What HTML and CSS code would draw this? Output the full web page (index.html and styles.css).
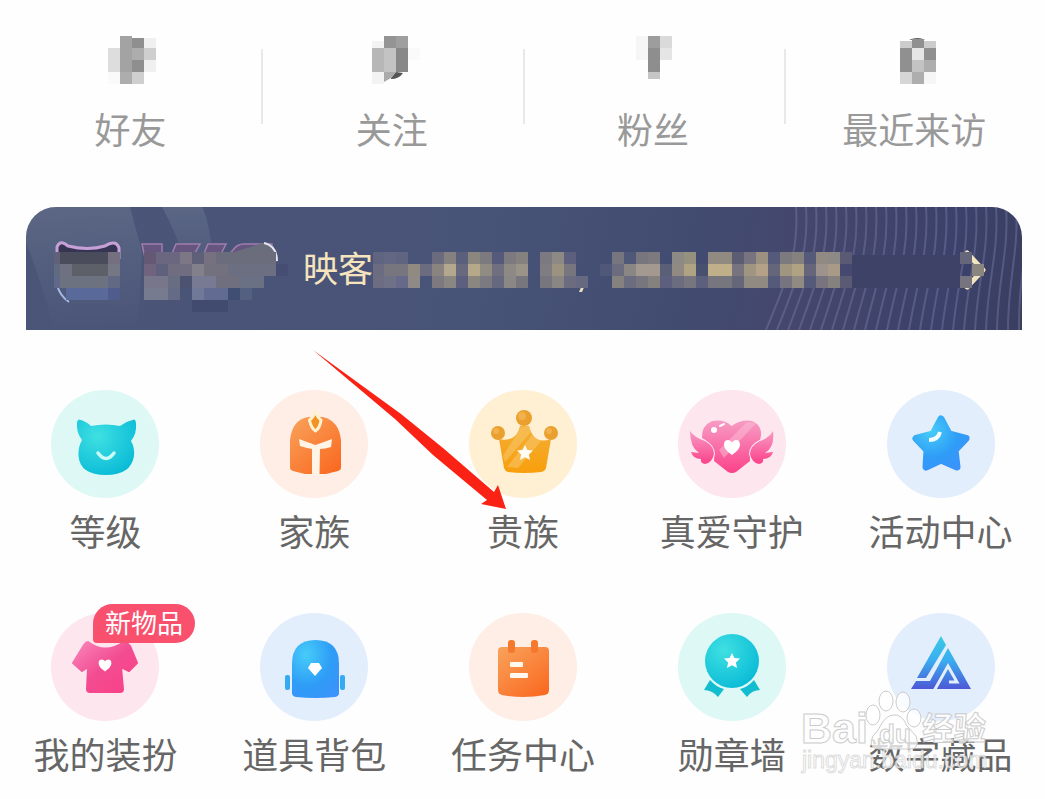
FILE: index.html
```html
<!DOCTYPE html>
<html lang="zh-CN">
<head>
<meta charset="utf-8">
<meta name="viewport" content="width=device-width, initial-scale=1">
<title>我的</title>
<link rel="stylesheet" href="styles.css">
</head>
<body>
<svg class="defs" width="0" height="0" aria-hidden="true">
  <defs>
    <radialGradient id="cyan" cx=".35" cy=".3" r=".8"><stop offset="0" stop-color="#3fe0e2"/><stop offset="1" stop-color="#07b9d6"/></radialGradient>
    <linearGradient id="orange" x1="0" y1="0" x2=".8" y2="1"><stop offset="0" stop-color="#f9a35c"/><stop offset="1" stop-color="#fa6b22"/></linearGradient>
    <linearGradient id="gold" x1="0" y1="0" x2="0" y2="1"><stop offset="0" stop-color="#f3ae35"/><stop offset="1" stop-color="#f89f0c"/></linearGradient>
    <linearGradient id="pink" x1="0" y1="0" x2="0" y2="1"><stop offset="0" stop-color="#f79cc4"/><stop offset="1" stop-color="#fb4189"/></linearGradient>
    <linearGradient id="rose" x1="0" y1="0" x2="1" y2="1"><stop offset="0" stop-color="#f987bb"/><stop offset=".5" stop-color="#f34c91"/><stop offset="1" stop-color="#fb3f86"/></linearGradient>
    <radialGradient id="blue" cx=".3" cy=".25" r=".9"><stop offset="0" stop-color="#46ccf8"/><stop offset=".6" stop-color="#2f9df7"/><stop offset="1" stop-color="#3a92fb"/></radialGradient>
    <linearGradient id="peak" gradientUnits="userSpaceOnUse" x1="0" y1="23" x2="0" y2="76"><stop offset="0" stop-color="#3bcbe4"/><stop offset=".45" stop-color="#3aaef0"/><stop offset="1" stop-color="#4d59d6"/></linearGradient>
    <path id="star" d="M0-8 2.4-3 8-2.4 3.9 1.4 5 7 0 4.2-5 7-3.9 1.4-8-2.4-2.4-3Z"/>
    <path id="heart" d="M0 8C-4 5-8 2-8-2.500C-8-8-2-8 0-4.500C2-8 8-8 8-2.500C8 2 4 5 0 8Z"/>
  </defs>
</svg>

<main class="page">
  <nav class="stats">
    <a class="stat" href="#">
      <svg class="stat-value" viewBox="0 0 60 48" shape-rendering="crispEdges" aria-hidden="true">
        <path fill="#ddd" d="M7 12h12v24H7z"/><path fill="#a3a3a3" d="M19 0h12v36H19z"/><path fill="#8f8f8f" d="M31 2h12v10H31zM31 24h12v12H31z"/><path fill="#adadad" d="M31 12h12v12H31zM19 36h12v12H19z"/><path fill="#f0f0f0" d="M43 2h12v10H43zM43 24h12v12H43z"/><path fill="#cfcfcf" d="M43 12h12v12H43zM31 36h12v12H31z"/><path fill="#fafafa" d="M7 36h12v12H7z"/>
      </svg>
      <span class="stat-label">好友</span>
    </a>
    <a class="stat" href="#">
      <svg class="stat-value" viewBox="0 0 60 48" aria-hidden="true">
        <path fill="#555" d="M29 42 34 36 41 37Q37 43 29 43z"/>
        <g shape-rendering="crispEdges"><path fill="#f3f3f3" d="M10 5h12v7H10zM10 36h12v12H10z"/><path fill="#949494" d="M22 0h12v12H22z"/><path fill="#9f9f9f" d="M34 0h12v12H34z"/><path fill="#b7b7b7" d="M10 12h12v24H10z"/><path fill="#c3c3c3" d="M22 12h12v24H22z"/><path fill="#888" d="M34 12h12v24H34z"/><path fill="#fafafa" d="M46 12h12v12H46z"/></g><path fill="#ababab" d="M22 36h12l-5 6-7 4z"/>
      </svg>
      <span class="stat-label">关注</span>
    </a>
    <a class="stat" href="#">
      <svg class="stat-value" viewBox="0 0 60 48" shape-rendering="crispEdges" aria-hidden="true">
        <path fill="#f6f6f6" d="M13 0h12v24H13z"/><path fill="#9d9d9d" d="M25 0h12v12H25z"/><path fill="#8e8e8e" d="M25 12h12v24H25z"/><path fill="#dadada" d="M37 0h12v12H37z"/><path fill="#e5e5e5" d="M37 12h12v12H37z"/><path fill="#c5c5c5" d="M25 36h12v7H25z"/>
      </svg>
      <span class="stat-label">粉丝</span>
    </a>
    <a class="stat" href="#">
      <svg class="stat-value" viewBox="0 0 60 48" aria-hidden="true">
        <path fill="#555" d="M25 4q9-4 16 0z"/>
        <g shape-rendering="crispEdges"><path fill="#ccc" d="M16 5h12v7H16zM40 5h12v7H40z"/><path fill="#909090" d="M28 3h12v9H28zM16 12h12v24H16zM40 12h12v12H40z"/><path fill="#e6e6e6" d="M28 12h12v12H28z"/><path fill="#c3c3c3" d="M28 24h12v12H28z"/><path fill="#aeaeae" d="M40 24h12v12H40zM28 36h12v12H28z"/><path fill="#d6d6d6" d="M16 36h12v12H16z"/><path fill="#f6f6f6" d="M40 36h12v12H40z"/></g>
      </svg>
      <span class="stat-label">最近来访</span>
    </a>
  </nav>

  <a class="banner" href="#">
    <svg class="banner-backdrop" viewBox="0 0 996 123" preserveAspectRatio="none" aria-hidden="true">
      <defs><linearGradient id="sheen" x1="0" y1="0" x2="0" y2="1"><stop offset="0" stop-color="#8090a4" stop-opacity=".3"/><stop offset="1" stop-color="#8090a4" stop-opacity="0"/></linearGradient></defs>
      <path fill="url(#sheen)" d="M0 0H104L116 45 112 123H28Q14 70 0 36Z"/>
      <path fill="url(#sheen)" d="M136 0H176Q184 14 188 60L168 90Q158 40 136 0Z"/>
      <g id="ripples" fill="none" stroke="#7f82ae" stroke-opacity=".4" stroke-width="2"></g>
      <path fill="#3d4266" d="M822 48H934V81H822Z"/>
    </svg>
    <svg class="banner-logo" viewBox="0 0 277 123" aria-hidden="true">
      <path fill="#353553" stroke="#c7a0d8" stroke-width="3" d="M31 52V40Q34 32 42 39 62 44 79 39 90 32 93 41V52"/>
      <path fill="none" stroke="#a7b8e6" stroke-width="2" d="M31 78Q34 89 43 95"/>
      <g fill="#66557f" stroke="#a07daf" stroke-width="1.500"><path d="M116 37h20v14h-17zM150 37h24l-8 14h-22zM182 37h18l-7 14h-17zM207 43q4-6 11-6h28v14h-46z"/></g>
      <path fill="#696d7c" d="M205 46 240 35Q251 39 251 55H200Z"/>
      <path fill="none" stroke="#e6e4ee" stroke-width="2" d="M238 36Q251 39 251 54"/>
      <g data-mosaic="logo" shape-rendering="crispEdges"></g>
    </svg>
    <span class="banner-text">映客</span>
    <svg class="banner-rest" viewBox="0 0 649 123" preserveAspectRatio="xMinYMid meet" aria-hidden="true">
      <g fill="#eadfbd"><circle cx="74" cy="47" r="2"/><circle cx="102" cy="47" r="2"/><path d="M122 46h3v3h-3zM142 46h3v3h-3zM151 46h4v3h-4zM172 46h3v3h-3zM209 78h3l-3 7h-3z"/></g>
      <path fill="none" stroke="#f1e3bd" stroke-width="5" stroke-linecap="round" stroke-linejoin="round" d="M594 46 610 63 594 80"/>
      <g data-mosaic="headline" shape-rendering="crispEdges"></g>
    </svg>
  </a>

  <nav class="menu">
    <a class="item" href="#">
      <svg class="icon cyan" viewBox="0 0 108 108" aria-hidden="true">
        <path fill="url(#cyan)" d="M28 29.500Q35 31 40 36Q55 33 69 36Q76 31 83 29.500Q85 30 85 34Q86 43 80 51Q84 58 83 66Q80 85 55 85Q29 85 27.500 66Q27 57 31 50Q25 42 26 33Q26 30 28 29.500Z"/>
        <path fill="none" stroke="#c9fbf7" stroke-width="3.500" stroke-linecap="round" d="M47 63Q55 74 63 63"/>
      </svg>
      <span class="item-label">等级</span>
    </a>
    <a class="item" href="#">
      <svg class="icon orange" viewBox="0 0 108 108" aria-hidden="true">
        <path fill="url(#orange)" d="M30 78V50Q32 30 48 27H63Q79 31 81 50V78Q81 80 78 81L66 84H45L33 81Q30 80 30 78Z"/>
        <path fill="#fff4e6" d="M39 49Q47 52 55.500 55Q64 52 72 49L71 57Q65 59 60 59L59.500 85H52V59Q46 58 40 56Z"/>
        <path fill="#f29220" stroke="#fff1cf" stroke-width="3" stroke-linejoin="round" d="M55.500 21Q57 27 61 30Q60 38 55.500 41Q51 38 49.500 30Q54 27 55.500 21Z"/>
      </svg>
      <span class="item-label">家族</span>
    </a>
    <a class="item" href="#">
      <svg class="icon gold" viewBox="0 0 108 108" aria-hidden="true">
        <path fill="url(#gold)" d="M30 49Q37 51 43 48Q49 45 51 36H60Q62 45 68 49Q74 52 82 49L77 78Q76 81 72 82Q55 84 39 82Q36 81 35 78Z"/>
        <path fill="#f8c566" opacity=".6" d="M52 37 60 36 62 42 36 72 34 66ZM63 45 68 49 72 51 49 78 38 77Z"/>
        <g fill="#eaa02e"><circle cx="55" cy="28" r="8"/><circle cx="29" cy="43" r="7"/><circle cx="82" cy="43" r="7"/></g>
        <g fill="#f6bd61" opacity=".6"><circle cx="53" cy="26" r="4"/><circle cx="27" cy="41" r="3"/><circle cx="80" cy="41" r="3"/></g>
        <use href="#star" x="56" y="63" fill="#fffdf5"/>
      </svg>
      <span class="item-label">贵族</span>
      <svg class="pointer" viewBox="0 0 194 160" aria-hidden="true"><path fill="#fa2214" d="M0 0 88 64 130 98 181 142 185 135 193 159 168 154 174 150 120 105 82 69Z"/></svg>
    </a>
    <a class="item" href="#">
      <svg class="icon pink" viewBox="0 0 108 108" aria-hidden="true">
        <path fill="url(#pink)" d="M53.500 36Q64 29 74 31Q86 36 82 50Q71 55 72 71L58 82Q54 84 50 82L36 71Q38 56 24 48Q23 36 34 31Q46 29 53.500 36Z"/>
        <path fill="#fbc0d8" opacity=".5" d="M69 32 78 33 46 68 41 60Z"/>
        <path fill="url(#pink)" stroke="#fee6ef" stroke-width="2" paint-order="stroke" d="M12 41Q17 48 27 51Q36 56 36 64Q34 73 27 74Q22 73 23 69Q15 69 13 62L21 63Q12 57 12 41ZM95 41Q91 48 82 51Q72 56 72 64Q74 73 81 74Q86 73 85 69Q93 69 95 62L87 63Q97 57 95 41Z"/>
        <use href="#heart" x="54" y="57" fill="#fff"/><circle cx="36" cy="40" r="3" fill="#fff"/><path fill="none" stroke="#fff" stroke-width="2" stroke-linecap="round" d="m42 36 4-2"/>
      </svg>
      <span class="item-label">真爱守护</span>
    </a>
    <a class="item" href="#">
      <svg class="icon blue" viewBox="0 0 108 108" aria-hidden="true">
        <path fill="url(#blue)" stroke="url(#blue)" stroke-width="7" stroke-linejoin="round" d="M54 29 62 44 79 48.500 68 60 70 77 54 70 39 77 40 60 29 48.500 46 44Z"/>
        <path fill="none" stroke="#f5fcff" stroke-width="4" d="M42 50Q51 50 53 42"/>
      </svg>
      <span class="item-label">活动中心</span>
    </a>
    <a class="item" href="#">
      <svg class="icon pink" viewBox="0 0 108 108" aria-hidden="true">
        <path fill="url(#rose)" stroke="url(#rose)" stroke-width="2" stroke-linejoin="round" d="M37 29Q54 42 73 29Q77 30 79 33L86 50 78 58 70 54 72 76Q72 79 69 79H39Q36 79 36 76L37 54 31 58 22 50 33 32Q35 29 37 29Z"/>
        <use href="#heart" transform="translate(54 52) scale(.8)" fill="#fff"/>
      </svg>
      <span class="item-label">我的装扮</span>
      <span class="badge">新物品</span>
    </a>
    <a class="item" href="#">
      <svg class="icon blue" viewBox="0 0 108 108" aria-hidden="true">
        <path fill="url(#blue)" d="M32 80V51Q32 27 55.500 27T79 51V80Q79 83 75 84Q55 86 36 84Q32 83 32 80Z"/>
        <g fill="#35aaf2"><rect x="25" y="62" width="5" height="15" rx="2"/><rect x="80" y="62" width="5" height="15" rx="2"/></g>
        <path fill="#fff" d="M51 50H59L62 55 55 63 48 55Z"/>
      </svg>
      <span class="item-label">道具背包</span>
    </a>
    <a class="item" href="#">
      <svg class="icon orange" viewBox="0 0 108 108" aria-hidden="true">
        <path fill="url(#orange)" d="M29 38Q29 34 33 34H76Q80 34 80 38V77Q80 81 76 82Q54 86 33 82Q29 81 29 77Z"/>
        <g fill="#f4792c"><rect x="39" y="27" width="7" height="13" rx="3"/><rect x="62" y="27" width="7" height="13" rx="3"/></g>
        <g fill="#fff8ee"><rect x="41" y="49" width="13" height="5" rx="1"/><rect x="41" y="60" width="18" height="5" rx="1"/></g>
      </svg>
      <span class="item-label">任务中心</span>
    </a>
    <a class="item" href="#">
      <svg class="icon cyan" viewBox="0 0 108 108" aria-hidden="true">
        <circle cx="54" cy="48" r="27" fill="url(#cyan)"/>
        <path fill="#12bdd0" d="M32 67Q38 74 46 76L40 84Q34 77 26 77ZM76 67Q70 74 62 76L69 84Q74 77 82 77Z"/>
        <use href="#star" x="54" y="48" fill="#fff"/>
      </svg>
      <span class="item-label">勋章墙</span>
    </a>
    <a class="item" href="#">
      <svg class="icon blue" viewBox="0 0 108 108" aria-hidden="true">
        <path fill="url(#peak)" d="M54 23 59 32 39 65H30ZM61 35 84 76H24L29 68H43Z"/>
        <path fill="none" stroke="#e3eefd" stroke-width="3" d="M47 78 61 53 70 69H62"/>
      </svg>
      <span class="item-label">数字藏品</span>
    </a>
  </nav>

  <svg class="watermark" viewBox="0 0 194 98" aria-hidden="true">
    <g fill="#fff" fill-opacity=".75" stroke="#ccc" stroke-width="1">
      <ellipse cx="73" cy="32" rx="7" ry="10"/><ellipse cx="86" cy="18" rx="7" ry="10"/><ellipse cx="103" cy="19" rx="7" ry="10"/><ellipse cx="114" cy="35" rx="7" ry="9"/>
      <path d="M94 32Q102 31 107 43L116 53Q121 67 108 66H79Q67 65 73 53Q79 47 82 40Q87 32 94 32Z"/>
      <text class="mark-name" x="1" y="60">Bai</text>
      <text class="mark-du" x="79" y="60">du</text>
      <text class="mark-cn" x="122" y="57">经验</text>
    </g>
    <text class="mark-url" x="2" y="85">jingyan.baidu.com</text>
  </svg>
</main>
<script src="mosaic.js"></script>
</body>
</html>
```

FILE: styles.css
```css
* {
  box-sizing: border-box;
}

body {
  margin: 0;
  background: #fefefe;
  font-family: "Noto Sans CJK SC", "Noto Sans", sans-serif;
}

a {
  color: inherit;
  text-decoration: none;
}

.defs {
  position: absolute;
}

.page {
  position: relative;
  overflow: hidden;
  padding-top: 36px;
}

.stats {
  display: grid;
  grid-template-columns: repeat(4, 1fr);
}

.stat {
  display: flex;
  flex-direction: column;
  align-items: center;
  gap: 17px;
}

.stat + .stat {
  background: linear-gradient(#e8e8e8, #e8e8e8) no-repeat left 13px / 2px 75px;
}

.stat-value {
  width: 60px;
  height: 48px;
}

.stat-label {
  color: #999;
  font-size: 36px;
  line-height: 54px;
}

.banner {
  position: relative;
  display: flex;
  align-items: center;
  margin: 52px 23px 0 26px;
  overflow: hidden;
  border-radius: 30px 30px 0 0;
  background: linear-gradient(100deg, #4b5577 0%, #485378 45%, #414c70 65%, #45466c 78%, #3b416a 92%, #3a3f60 100%);
}

.banner-backdrop {
  position: absolute;
  inset: 0;
  width: 100%;
  height: 100%;
}

.banner-logo {
  position: relative;
  flex: none;
  width: 277px;
  height: 123px;
}

.banner-text {
  position: relative;
  flex: none;
  padding-bottom: 4px;
  color: #f5e4bd;
  font-size: 35px;
  line-height: 54px;
}

.banner-rest {
  position: relative;
  flex: 1;
  min-width: 0;
  height: 123px;
}

.menu {
  display: grid;
  grid-template-columns: repeat(5, 1fr);
  row-gap: 56px;
  padding: 60px 0 19px 1px;
}

.item {
  position: relative;
  display: flex;
  flex-direction: column;
  align-items: center;
  gap: 5px;
}

.icon {
  width: 108px;
  height: 108px;
  border-radius: 50%;
}

.cyan {
  background: #ddf8f5;
}

.orange {
  background: #feeee5;
}

.gold {
  background: #fff0d4;
}

.pink {
  background: #fee6ef;
}

.blue {
  background: #e3eefd;
}

.item-label {
  color: #666;
  font-size: 36px;
  line-height: 54px;
  white-space: nowrap;
}

.badge {
  position: absolute;
  top: -9px;
  left: 92px;
  padding: 0 12px 4px;
  border-radius: 20px 20px 20px 4px;
  background: #f9516d;
  color: #fff;
  font-size: 26px;
  line-height: 35px;
}

.pointer {
  position: absolute;
  top: -40px;
  left: -106px;
  z-index: 1;
  width: 194px;
  height: 160px;
}

.watermark {
  position: absolute;
  right: 51px;
  bottom: 18px;
  width: 194px;
  height: 98px;
}

.mark-name,
.mark-du {
  font-family: "Liberation Sans", sans-serif;
  font-weight: 700;
}

.mark-name {
  font-size: 43px;
}

.mark-du {
  font-size: 26px;
}

.mark-cn {
  font-size: 32px;
  font-weight: 700;
}

.mark-url {
  fill: #fff;
  fill-opacity: 0.75;
  stroke: #bbb;
  stroke-opacity: 0.5;
  font-family: "Liberation Sans", sans-serif;
  font-size: 23px;
}
```

FILE: mosaic.js
```js
const SVG = "http://www.w3.org/2000/svg";

function add(parent, name, attributes) {
  const node = document.createElementNS(SVG, name);
  for (const key in attributes) node.setAttribute(key, attributes[key]);
  parent.append(node);
}

// Each cell: column, row, width in cells, colour.
const mosaics = {
  logo: {
    x: 28, y: 45,
    cells: [
      [0, 0, 0.5, "#606078"], [0.5, 0, 4, "#4a4c5c"], [4.5, 0, 1, "#747080"],
      [0, 1, 0.5, "#606a80"], [0.5, 1, 1, "#707180"], [1.5, 1, 3, "#5d6068"], [4.5, 1, 1, "#757785"],
      [0, 2, 0.5, "#60698a"], [0.5, 2, 4, "#6d7280"], [4.5, 2, 1, "#626985"],
      [1, 3, 3.5, "#59699a"], [4.5, 3, 1, "#4f5c8c"],
      [7.5, 0, 1, "#655875"], [8.5, 0, 2, "#6b6780"], [10.5, 0, 1, "#7c7685"], [11.5, 0, 1, "#5e607a"], [12.5, 0, 1, "#777080"], [13.5, 0, 5, "#6b6d7c"],
      [7.5, 1, 1, "#70637d"], [8.5, 1, 1, "#5f607b"], [9.5, 1, 2, "#706d80"], [11.5, 1, 1, "#82808a"], [12.5, 1, 2, "#74717f"], [14.5, 1, 4, "#6b6f81"], [18.5, 1, 1, "#454e72"],
      [7.5, 2, 2, "#77768a"], [9.5, 2, 1, "#696d82"], [10.5, 2, 1, "#4b5370"], [11.5, 2, 2, "#777a92"], [13.5, 2, 2, "#706f80"], [15.5, 2, 2, "#6b7184"],
      [7.5, 3, 2, "#777b90"], [9.5, 3, 1, "#656b87"], [11.5, 3, 1, "#717998"], [12.5, 3, 2, "#626c92"], [14.5, 3, 1, "#414e74"], [15.5, 3, 1, "#536080"],
      [11.5, 4, 3, "#414b6f"]
    ]
  },
  headline: {
    x: -1, y: 45,
    rows: [
      "5f6481 636784 5f6481 - - 6a6b7f 85817f 5a5f7c 8b877f 7d7a7f 55597a 7d7a7f 85817f - 7c7980 8d8985 5c607e - - - 77767f 505879 77767f 7d7a7f - 8d8985 96907f - 908a80 908a80 5c5c72 77747f 9c9080 55597a 7d7a7f 85817f 55597a 908a82 8d8985 5a5a75 - - - - - - - - - 66667a",
      "6b6c7f 77767f 77767f 908a80 6c6c80 8a8480 b3a88e 68697f b5a98a 908c82 6f6f7f 8d8985 9a9488 - 807d82 9b9280 77767f - - 50587a 6c6c80 8a8683 a39990 a39990 5a5f78 918a82 b0a384 48506f c0b08a c0b08a 77747f a09580 b5a088 66667a a09680 b0a384 66667a 9d928c a99a88 45496f - - - - - - - - - - 8b8580",
      "6d6d82 6f7187 66698a 8f8a85 - 7c7980 8a8682 5c607e 8a8680 7b7a80 666880 8b8784 77767f - 77767f 8a8683 6c6c80 66697f - - 85817f 6c6c80 77767f 85817f 5c607e 6c6c80 77767f 5c607e 77767f 77767f 66667a 918a82 918a82 55597a 77747f 918a82 55597a 77747f 85817f 5a5a75 - - - - - - - - - 77747f"
    ]
  }
};

document.querySelectorAll("[data-mosaic]").forEach(group => {
  const m = mosaics[group.dataset.mosaic];
  const cells = m.cells || m.rows.flatMap((row, r) =>
    row.split(" ").map((c, i) => [i, r, 1, "#" + c]).filter(cell => cell[3] !== "#-"));
  cells.forEach(([c, r, w, fill]) =>
    add(group, "rect", { x: m.x + c * 12, y: m.y + r * 12, width: w * 12, height: 12, fill }));
});

const ripples = document.getElementById("ripples");
for (let i = 0; i < 24; i++) {
  const x = 770 + i * 10;
  const lean = 30 - i;
  add(ripples, "path", { d: `M${x} 0C${x + 3} 45 ${x - 8} 70 ${x - lean} 123` });
}
```
